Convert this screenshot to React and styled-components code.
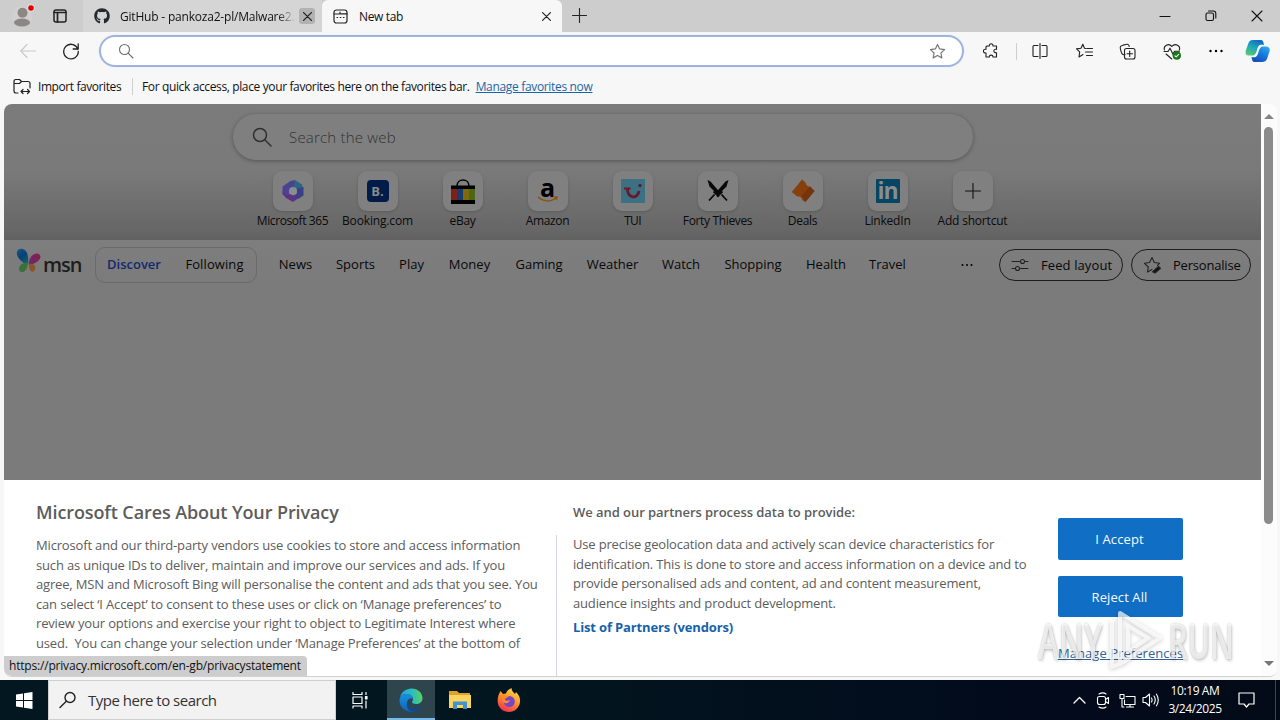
import styled, { createGlobalStyle } from 'styled-components';
import { FaGithub } from 'react-icons/fa';

const GlobalStyle = createGlobalStyle`
  * { box-sizing: border-box; }
  body {
    margin: 0;
    background: #f7f7f7;
    font-family: "Open Sans", "Noto Sans", sans-serif;
    font-size: 12px;
    color: #111;
  }
  svg { display: block; flex: none; }
`

const Screen = styled.div`
  width: 1280px;
  height: 720px;
  display: flex;
  flex-direction: column;
  overflow: hidden;
  position: relative;
`

const Label = styled.span`
  white-space: nowrap;
  letter-spacing: ${p => p.$ls || 0}px;
`

// ---------- tab strip ----------
const TabStrip = styled.div`
  height: 32px;
  flex: none;
  display: flex;
  background: #cdcdcd;
`

const ProfileArea = styled.div`
  width: 83px;
  display: flex;
  align-items: center;
  padding-left: 12px;
  gap: 17px;
`

const Tab = styled.div`
  width: ${p => p.$active ? 240 : 239}px;
  display: flex;
  align-items: center;
  padding: 0 ${p => p.$active ? 8 : 7}px 0 11px;
  background: ${p => p.$active ? '#f7f7f7' : '#d5d5d5'};
  border-radius: ${p => p.$active ? '6px 6px 0 0' : '0'};
  font-size: 12px;
`

const TabTitle = styled.div`
  flex: 1;
  margin-left: ${p => p.$gap}px;
  overflow: hidden;
  white-space: nowrap;
  letter-spacing: ${p => p.$ls}px;
  ${p => p.$fade && 'mask-image: linear-gradient(90deg, #000 88%, transparent 98%);'}
`

const TabClose = styled.div`
  width: 16px;
  height: 16px;
  border-radius: 3px;
  display: flex;
  align-items: center;
  justify-content: center;
  background: ${p => p.$hover ? '#b2b2b2' : 'transparent'};
`

const NewTabButton = styled.div`
  padding: 8px 0 0 10px;
  flex: 1;
`

const WindowButtons = styled.div`
  display: flex;
  align-items: center;
  gap: 34px;
  padding-right: 17px;
`

// ---------- toolbar ----------
const Toolbar = styled.div`
  height: 38px;
  flex: none;
  display: flex;
  align-items: center;
  padding-left: 20px;
`

const ReloadSlot = styled.div`
  flex: none;
  padding: 0 19px 0 26px;
`

const AddressBar = styled.div`
  width: 865px;
  flex: none;
  height: 32px;
  border: 2px solid #9fb3dc;
  border-radius: 16px;
  background: #fff;
  box-shadow: 0 0 0 1px #edf3fc;
  display: flex;
  align-items: center;
  justify-content: space-between;
  padding: 0 16px 0 17px;
`

const ToolIcons = styled.div`
  display: flex;
  align-items: center;
  margin-left: 18px;
`

const ToolSlot = styled.div`
  width: ${p => p.$w}px;
  flex: none;
  display: flex;
  justify-content: center;
`

const Separator = styled.div`
  width: 1px;
  height: 17px;
  background: #cfcfcf;
`

const FavoritesBar = styled.div`
  height: 34px;
  flex: none;
  display: flex;
  align-items: center;
  padding: 0 0 2px 13px;
`

const ImportFavorites = styled.div`
  display: flex;
  align-items: center;
  gap: 7px;
  width: 119px;
`

const FavHint = styled.div`
  display: flex;
  gap: 6px;
  padding-left: 9px;
`

const FavLink = styled.a`
  color: #1c66a8;
  text-decoration: underline;
  white-space: nowrap;
  letter-spacing: ${p => p.$ls}px;
`

// ---------- page ----------
const PageRow = styled.div`
  height: 573px;
  flex: none;
  margin: 0 3px 0 4px;
  display: flex;
  border-radius: 8px;
  overflow: hidden;
  border-bottom: 1px solid #d2d2d4;
  position: relative;
  background: #fff;
`

const Page = styled.div`
  width: 1257px;
  flex: none;
  display: flex;
  flex-direction: column;
`

const Hero = styled.div`
  height: 136px;
  flex: none;
  padding: 10px 0 0 229px;
  background: linear-gradient(180deg, #7b7b7b 0, #7a7a7a 66px, #666 128px, #616161 136px);
`

const SearchBox = styled.div`
  width: 740px;
  height: 46px;
  border-radius: 23px;
  background: #7f7f7f;
  box-shadow: 0 1px 4px rgba(0, 0, 0, 0.32);
  display: flex;
  align-items: center;
  padding-left: 19px;
  gap: 17px;
  color: #333;
  font-size: 15px;
  font-weight: 300;
`

const Shortcuts = styled.div`
  display: flex;
  padding: 11px 0 0 17px;
`

const Shortcut = styled.div`
  width: 85px;
  flex: none;
  display: flex;
  flex-direction: column;
  align-items: center;
  color: #0a0a0a;
`

const Tile = styled.div`
  width: 40px;
  height: 40px;
  border-radius: 9px;
  background: #808080;
  box-shadow: 0 1px 3px rgba(0, 0, 0, 0.16);
  display: flex;
  align-items: center;
  justify-content: center;
  margin-bottom: 1px;
`

const BookingMark = styled.div`
  width: 22px;
  height: 22px;
  border-radius: 4px;
  background: #011c48;
  color: #8a8a8a;
  font-weight: 700;
  font-size: 13px;
  line-height: 22px;
  text-align: center;
`

const LinkedInMark = styled.div`
  width: 24px;
  height: 24px;
  border-radius: 1px;
  background: #054664;
  color: #8c8c8c;
  font: 700 23px/23px "Open Sans", sans-serif;
  text-align: center;
  letter-spacing: -1px;
`

const AmazonMark = styled.div`
  position: relative;
  font: 700 25px/16px "Open Sans", sans-serif;
  color: #000;
  height: 24px;
  svg { position: absolute; left: -3px; top: 17px; }
`

const Feed = styled.div`
  height: 240px;
  flex: none;
  background: linear-gradient(180deg, #7e7e7e, #7b7b7b 45px, #7b7b7b);
`

const FeedNav = styled.div`
  height: 50px;
  display: flex;
  align-items: center;
  padding-left: 12px;
  font-size: 13px;
  color: #080808;
`

const MsnLogo = styled.div`
  display: flex;
  width: 79px;
  font-size: 20px;
  line-height: 30px;
  font-weight: 600;
  color: #1d1d1d;
  gap: 1px;
  height: 34px;
  letter-spacing: -1px;
`

const MsnName = styled.span`
  padding-top: 2px;
`

const FeedSwitch = styled.div`
  width: 162px;
  height: 36px;
  border: 1px solid #6a6a6a;
  border-radius: 10px;
  display: flex;
  align-items: center;
  padding: 0 0 2px 11px;
  gap: 24px;
  margin-right: 22px;
`

const NavItem = styled.div`
  width: ${p => p.$w}px;
  flex: none;
  display: flex;
  justify-content: center;
  white-space: nowrap;
  letter-spacing: ${p => p.$ls || 0}px;
  ${p => p.$active && 'color: #12296e; font-weight: 600;'}
`

const NavList = styled.div`
  display: flex;
  gap: 24px;
  flex: 1;
  padding-bottom: 2px;
`

const PillButton = styled.div`
  width: ${p => p.$w}px;
  height: 32px;
  border: 1px solid #1c1c1c;
  border-radius: 16px;
  display: flex;
  align-items: center;
  padding-left: 11px;
  gap: ${p => p.$gap}px;
  margin-right: ${p => p.$mr}px;
  white-space: nowrap;
  letter-spacing: ${p => p.$ls}px;
`

const MoreDots = styled.svg`
  margin-right: 26px;
`

const Consent = styled.div`
  flex: 1;
  display: flex;
  background: #fff;
  color: #5c5c5c;
  overflow: hidden;
`

const PrivacyColumn = styled.div`
  width: 553px;
  padding: 20px 0 0 32px;
`

const PrivacyTitle = styled.h2`
  margin: 0 0 11px;
  font-size: 18px;
  line-height: 25px;
  font-weight: 600;
  color: #5c5c5c;
  white-space: nowrap;
  letter-spacing: ${p => p.$ls}px;
`

const Paragraph = styled.p`
  margin: 0;
  font-size: 13px;
  line-height: 19.5px;
  white-space: pre;
  letter-spacing: ${p => p.$ls}px;
`

const PartnersColumn = styled.div`
  width: 501px;
  display: flex;
  flex-direction: column;
  padding-top: 22px;
`

const PartnersTitle = styled.h3`
  margin: 0 0 12px 16px;
  font-size: 13px;
  line-height: 21px;
  font-weight: 600;
  letter-spacing: ${p => p.$ls}px;
`

const PartnersBody = styled.div`
  flex: 1;
  border-left: 1px solid #d4d6dc;
  padding-left: 16px;
  margin-left: -1px;
`

const PartnersLink = styled.div`
  margin-top: 4px;
  font-size: 13px;
  line-height: 20px;
  font-weight: 700;
  color: #1462ac;
  letter-spacing: ${p => p.$ls}px;
`

const ConsentActions = styled.div`
  width: 125px;
  padding-top: 38px;
  display: flex;
  flex-direction: column;
`

const ConsentButton = styled.div`
  height: ${p => p.$h}px;
  margin-bottom: 16px;
  border-radius: 2px;
  background: #106ec5;
  color: #f4fafd;
  font-size: 13px;
  display: flex;
  align-items: center;
  justify-content: center;
  letter-spacing: ${p => p.$ls}px;
  padding-right: 2px;
`

const PreferencesLink = styled.a`
  margin-top: 11px;
  font-size: 13px;
  text-decoration: underline;
  color: #336496;
  white-space: nowrap;
  letter-spacing: ${p => p.$ls}px;
`

const Scrollbar = styled.div`
  flex: 1;
  background: #fcfcfc;
  display: flex;
  flex-direction: column;
  align-items: center;
  padding: 10px 1px 10px 0;
`

const ScrollThumb = styled.div`
  width: 9px;
  height: 397px;
  margin: 8px 0 auto;
  border-radius: 5px;
  background: #8b8b8b;
`

const StatusBubble = styled.div`
  position: absolute;
  left: 0;
  bottom: 0;
  width: 303px;
  height: 20px;
  border-radius: 0 4px 0 0;
  background: #cdcdcd;
  color: #111;
  padding-left: 5px;
  line-height: 20px;
  white-space: nowrap;
  letter-spacing: ${p => p.$ls}px;
`

const Watermark = styled.div`
  position: absolute;
  left: 1038px;
  top: 608px;
  width: 196px;
  height: 66px;
  display: flex;
  align-items: center;
  justify-content: space-between;
  color: rgba(255, 255, 255, 0.7);
  text-shadow: 0 0 3px rgba(0, 0, 0, 0.22), 1px 2px 4px rgba(0, 0, 0, 0.18);
  font: 600 48px/66px "Open Sans", sans-serif;
  svg { filter: drop-shadow(0 1px 2px rgba(0, 0, 0, 0.28)); }
`

const WatermarkWord = styled.span`
  width: 66px;
  transform: scaleX(${p => p.$sx});
  transform-origin: ${p => p.$from} center;
  display: flex;
  justify-content: ${p => p.$from === 'left' ? 'flex-start' : 'flex-end'};
`

// ---------- taskbar ----------
const Taskbar = styled.div`
  height: 40px;
  margin-top: auto;
  flex: none;
  display: flex;
  align-items: center;
  background: linear-gradient(90deg, #02171f 0, #02161f 500px, #020a1c 1050px, #030a17 1280px);
  color: #fff;
`

const StartButton = styled.div`
  width: 48px;
  flex: none;
  padding-left: 16px;
`

const TaskSearch = styled.div`
  width: 288px;
  height: 40px;
  background: #f2f2f2;
  border: 1px solid #d0d0d0;
  color: #333;
  font-size: 15px;
  display: flex;
  align-items: center;
  padding-left: 10px;
  gap: 11px;
`

const TaskSlot = styled.div`
  width: ${p => p.$w || 49}px;
  height: 40px;
  display: flex;
  align-items: center;
  justify-content: center;
  background: ${p => p.$active ? '#2f454d' : 'transparent'};
  border-bottom: 2px solid ${p => p.$active ? '#76b9ed' : 'transparent'};
  padding: 2px ${p => p.$pr || 0}px 0 0;
`

const Tray = styled.div`
  margin-left: auto;
  display: flex;
  align-items: center;
  height: 40px;
  width: 213px;
`

const TraySlot = styled.div`
  width: 24px;
  flex: none;
  display: flex;
  justify-content: center;
`

const Clock = styled.div`
  width: 64px;
  flex: none;
  text-align: center;
  font-size: 12px;
  line-height: 18px;
  letter-spacing: ${p => p.$ls}px;
`

const ActionCenter = styled.div`
  flex: 1;
  padding-left: 11px;
`

const PeekEdge = styled.div`
  width: 5px;
  height: 40px;
  border-left: 1px solid #3b4450;
`

const Icon = ({ w = 16, h, vb, sw = 1.1, color = '#222', children }) => (
  <svg width={w} height={h || w} viewBox={vb || `0 0 ${w} ${h || w}`} fill="none"
    stroke={color} strokeWidth={sw} strokeLinecap="round" strokeLinejoin="round">
    {children}
  </svg>
)

const Cross = ({ size = 8, sw = 1.3 }) => (
  <Icon w={size} sw={sw}><path d={`M.6.6 ${size - .6} ${size - .6}M${size - .6} .6.6 ${size - .6}`} /></Icon>
)

const ProfileIcon = () => (
  <svg width="24" height="24" viewBox="0 0 24 24">
    <circle cx="10" cy="12" r="10" fill="#d3d1cf" />
    <circle cx="10.500" cy="8.800" r="5" fill="#8a8784" />
    <ellipse cx="10" cy="18.500" rx="8" ry="4" fill="#8a8784" />
    <circle cx="19" cy="4" r="4" fill="#dcdcdc" />
    <circle cx="19" cy="4" r="2.800" fill="#e0000b" />
  </svg>
)

const EbayBag = () => (
  <svg width="24" height="25" viewBox="0 0 24 25">
    <path d="M6 7c0-8 12-8 12 0" fill="none" stroke="#000" strokeWidth="1.600" />
    <path fill="#000" d="M0 6.500h24V25H0z" />
    <path fill="#7b2118" d="M0 10h6v11H0z" />
    <path fill="#173c70" d="M6 10h6v11H6z" />
    <path fill="#80690a" d="M12 10h6v11h-6z" />
    <path fill="#4b6812" d="M18 10h6v11h-6z" />
  </svg>
)

const TuiMark = () => (
  <svg width="24" height="24" viewBox="0 0 24 24" fill="none">
    <path fill="#3b7182" d="M0 0h24v24H0z" />
    <path d="M6.500 9c-.8 11 10.500 11.500 11.500 3" stroke="#681827" strokeWidth="2.800" />
    <path d="M3 9.500h6.500" stroke="#681827" strokeWidth="2" />
    <circle cx="19" cy="6.500" r="1.700" fill="#681827" />
  </svg>
)

const Sword = () => (
  <>
    <path d="M.5 0l3 1.500L13 12.500l-2.500 2L2.500 6.500z" fill="#080808" />
    <path d="M10 16.500l5.500-5M14.500 14.500l5.500 6" stroke="#080808" strokeWidth="1.800" />
  </>
)

const Swords = () => (
  <svg width="22" height="22" viewBox="0 0 22 22">
    <Sword />
    <g transform="matrix(-1 0 0 1 22 0)"><Sword /></g>
  </svg>
)

const OfficeMark = () => (
  <svg width="24" height="24" viewBox="0 0 24 24">
    <path d="M9 2.500L14 1l7 4.500L22 9l-6.500 1-3.500-2z" fill="#2b6685" />
    <path d="M9.500 2L14 1.500 12.500 8 8 11v5l-3 1.500-3.500-3v-7z" fill="#4a4490" />
    <path d="M1.500 12c2 5 5 4.500 8 2.500l3 2 7.500-3.500L19 18l-7 5-7-4-3.500-4z" fill="#5a3482" />
    <path d="M22.500 8v8.500L17 20l-3-3.500 2-2.500v-4.500z" fill="#384187" />
    <circle cx="12" cy="12" r="3.900" fill="#8b8b90" />
  </svg>
)

const DealTag = () => (
  <svg width="24" height="25" viewBox="0 0 24 25">
    <path d="M11 .5l3.500 3 .7 2.300 1.800 1.500 2 .1L23.500 12l-9.300 11-3-2-.6-2-2-1.600-2.400.1L.8 13z" fill="#873f0d" />
    <path d="M10.500 17l4 6 9-11-4.500-4.500z" fill="#73340e" />
  </svg>
)

const Butterfly = () => (
  <svg width="26" height="26" viewBox="0 0 26 26">
    <defs>
      <linearGradient id="wingL" x1="0" y1="0" x2="0.500" y2="1">
        <stop offset="0" stopColor="#155b86" /><stop offset=".55" stopColor="#083f79" /><stop offset="1" stopColor="#155f6e" />
      </linearGradient>
      <linearGradient id="wingR" x1="1" y1="0" x2="0" y2="1">
        <stop offset="0" stopColor="#861f48" /><stop offset="1" stopColor="#6d2872" />
      </linearGradient>
    </defs>
    <path d="M1 4C2-1 9 0 11 5c1.500 4 1.500 8 1 12C6 15 0 9 1 4z" fill="url(#wingL)" />
    <path d="M12 15c-6-1-10.500 4-8.500 7.500C6 26.500 11.500 23 12 15z" fill="#3a7039" />
    <path d="M13 17C12 10 18 4 22.500 6c4.500 2 1 9-9.500 11z" fill="url(#wingR)" />
    <path d="M13 16c5-1 7 2 6 5.500-1.500 4-6.500 3-6-5.500z" fill="#8b5426" />
  </svg>
)

const Copilot = () => (
  <svg width="25" height="24" viewBox="0 0 25 24">
    <defs>
      <linearGradient id="cpA" x1=".7" y1="0" x2=".2" y2="1">
        <stop offset="0" stopColor="#1267c8" /><stop offset=".45" stopColor="#19a5bd" /><stop offset="1" stopColor="#58ca70" />
      </linearGradient>
      <linearGradient id="cpB" x1=".8" y1="0" x2=".2" y2="1">
        <stop offset="0" stopColor="#2aa8ef" /><stop offset=".5" stopColor="#1774dc" /><stop offset="1" stopColor="#154bb2" />
      </linearGradient>
    </defs>
    <path d="M8 1h8c2 0 2.500 2 3 5-5-1-6 1-7 5-1 3.500-2 5.500-5 5.500H3.500C1 16.500 0 14.500.8 11.500L3.500 4C4.300 2 5.500 1 8 1z" fill="url(#cpA)" />
    <path d="M17 23H9.500c-2 0-2.500-2-3-5 5 1 6-1 7-5 1-3.500 2-5.500 5-5.500H21c3 0 4.300 2 3.500 5L22 20c-.8 2-2.500 3-5 3z" fill="url(#cpB)" />
  </svg>
)

const EdgeLogo = () => (
  <svg width="24" height="24" viewBox="0 0 24 24">
    <defs>
      <linearGradient id="edA" x1="0" y1=".5" x2="1" y2=".4">
        <stop offset="0" stopColor="#299fe2" /><stop offset=".5" stopColor="#2abac5" /><stop offset="1" stopColor="#58d45c" />
      </linearGradient>
      <linearGradient id="edB" x1="0" y1="0" x2="0" y2="1">
        <stop offset="0" stopColor="#1691de" /><stop offset="1" stopColor="#1163b8" />
      </linearGradient>
    </defs>
    <path d="M1 10C2 4 7 .5 12.500.5 19 .5 23.500 5 23.500 10c0 4-3 6-6.500 6-2.500 0-4-1-4-2 0-.6 1-1.200 1-3 0-3-3-5-6.500-5C4.500 6 2 7.500 1 10z" fill="url(#edA)" />
    <path d="M.5 12.500C.5 8.500 4 6 7.500 6c3.600 0 6.500 2 6.500 5-4-1.500-6 1.500-6 4.500 0 4 3 7.500 7 8C7 25 .5 19.500.5 12.500z" fill="url(#edB)" />
    <path d="M10 11.500c-3 4 0 9 5 9 3 0 5-1 6.500-2.500.5-.4 1 0 .7.600C20.500 22 17 24 13 23.500c-5-1-7-7-3-12z" fill="#114a8b" />
  </svg>
)

const FolderLogo = () => (
  <svg width="22" height="20" viewBox="0 0 22 20">
    <path d="M0 1h8l2 2h11v15H0z" fill="#dda32b" />
    <path d="M0 5h22v13H0z" fill="#fbd35f" />
    <path d="M4 19v-7.500h14V19h-4v-4H8v4z" fill="#3f93cf" />
  </svg>
)

const FirefoxLogo = () => (
  <svg width="24" height="24" viewBox="0 0 24 24">
    <defs>
      <linearGradient id="fx" x1=".8" y1="0" x2=".3" y2="1">
        <stop offset="0" stopColor="#ffe14a" /><stop offset=".45" stopColor="#ff9a2c" /><stop offset="1" stopColor="#f2304e" />
      </linearGradient>
    </defs>
    <path d="M2 6l1.500-3L6 6l3-.5C10 2 13 1 14.500 0c0 3 2 4 3.500 6l1-2c3 3 4.500 6 4 10-.7 6-5.500 10-11 10S1 20 .7 14C.6 11 1 8 2 6z" fill="url(#fx)" />
    <circle cx="12.300" cy="13.500" r="5.500" fill="#7646c8" />
    <path d="M4 8c4-2 5 0 8 0-1 2-4 1.500-4 4 1 1 3 1 5 0-1 4-6 4-7.500 1z" fill="#ff8a26" />
  </svg>
)

const shortcuts = [
  { name: 'Microsoft 365', ls: -0.4, icon: <OfficeMark /> },
  { name: 'Booking.com', ls: -0.15, icon: <BookingMark>B.</BookingMark> },
  { name: 'eBay', ls: -0.3, icon: <EbayBag /> },
  { name: 'Amazon', ls: -0.35, icon: (
    <AmazonMark>a<svg width="22" height="7" viewBox="0 0 22 7" fill="none" stroke="#8a5415" strokeWidth="1.500"><path d="M1 1c6 5 13 5 18 1M17 1.500l3-.5-.7 3" /></svg></AmazonMark>
  ) },
  { name: 'TUI', ls: -0.7, icon: <TuiMark /> },
  { name: 'Forty Thieves', ls: -0.35, icon: <Swords /> },
  { name: 'Deals', ls: -0.3, icon: <DealTag /> },
  { name: 'LinkedIn', ls: -0.2, icon: <LinkedInMark>in</LinkedInMark> },
  { name: 'Add shortcut', ls: -0.2, icon: <Icon w={16} color="#111"><path d="M8 .5v15M.5 8h15" /></Icon> },
]

const topics = [
  ['News', 33], ['Sports', 39], ['Play', 25], ['Money', 43], ['Gaming', 48], ['Weather', 51],
  ['Watch', 38], ['Shopping', 58], ['Health', 40], ['Travel', 35],
]

const star = 'M8 1.300l2 4.300 4.700.6-3.500 3.200.9 4.600L8 11.700 3.900 14l.9-4.600L1.300 6.200 6 5.600z'

const BrowserTabs = () => (
  <TabStrip>
    <ProfileArea>
      <ProfileIcon />
      <Icon w={14} h={14} sw={1.500}><rect x="1" y="1" width="12" height="12" rx="2" /><path d="M1 3.500h12M4.500 4v9" strokeWidth="1.700" /></Icon>
    </ProfileArea>
    <Tab>
      <FaGithub size={16} color="#24292e" />
      <TabTitle $gap={10} $ls={-0.2} $fade>GitHub - pankoza2-pl/Malware2.</TabTitle>
      <TabClose $hover><Cross size={9} /></TabClose>
    </Tab>
    <Tab $active>
      <Icon w={15} sw={1.200}><rect x="1" y="1" width="13" height="13" rx="2.500" /><path d="M1 5h6V3M8 4.800h6M4 8.500h.6M7.200 8.500h.6M10.400 8.500h.6" /></Icon>
      <TabTitle $gap={11} $ls={-0.35}>New tab</TabTitle>
      <TabClose><Cross size={9} sw={1.200} /></TabClose>
    </Tab>
    <NewTabButton><Icon w={15}><path d="M7.500.5v14M.5 7.500h14" /></Icon></NewTabButton>
    <WindowButtons>
      <Icon w={12} color="#111"><path d="M1 6.500h10" /></Icon>
      <Icon w={12} color="#111"><rect x="1" y="3" width="7.500" height="7.500" rx="1.500" /><path d="M3.500 1h5Q10.800 1 10.800 3.500v4.500" /></Icon>
      <Icon w={12} color="#111"><path d="M1 1l10 10M11 1L1 11" /></Icon>
    </WindowButtons>
  </TabStrip>
)

const BrowserToolbar = () => (
  <Toolbar>
    <Icon w={16} color="#c9c9c9"><path d="M15.500 8H.8M7 1.500L.8 8 7 14.500" /></Icon>
    <ReloadSlot><Icon w={18} sw={1.300}><path d="M16 7.500A7.300 7.300 0 1 0 16.300 9.500M16.200 2v5h-5" /></Icon></ReloadSlot>
    <AddressBar>
      <Icon w={16} color="#6b6b6b"><circle cx="6.500" cy="6.500" r="5" /><path d="M10.300 10.300l4.700 4.700" /></Icon>
      <Icon w={17} vb="0 0 16 16" color="#777"><path d={star} /></Icon>
    </AddressBar>
    <ToolIcons>
      <ToolSlot $w={18}>
        <Icon w={16}><path d="M4 3h2.300c-.3-3 4-3 3.700 0h3.500v3.300c-3.500-.6-3.500 3.700 0 3.500V14H10c0-2.500-3.700-2.500-3.700 0H3v-4C-.5 10.500-.5 5.500 3 6.300V4z" /></Icon>
      </ToolSlot>
      <ToolSlot $w={32}><Separator /></ToolSlot>
      <ToolSlot $w={16}><Icon w={16}><path d="M6 2.500H2Q1 2.500 1 3.500v9q0 1 1 1h4M10 2.500h4q1 0 1 1v9q0 1-1 1h-4M8 .5v15" /></Icon></ToolSlot>
      <ToolSlot $w={72}><Icon w={17} h={16}><path d="M10 5.500L8.500 5.300 6.800 1.300 5 5.300l-4.500.6 3.200 3L3 14l4-2.500M11 5.500h5.500M9.500 9h7M10.500 12.500h6" /></Icon></ToolSlot>
      <ToolSlot $w={15}><Icon w={17}><path d="M6 11.500C3 12.500 2.500 10 1.500 6.500.8 3.500 1.300 3 4 2.200 8 1 9.500.5 10.300 3.500" /><rect x="5.500" y="5.500" width="10.500" height="10.500" rx="2" /><path d="M10.700 8v5.500M8 10.700h5.500" /></Icon></ToolSlot>
      <ToolSlot $w={73}><Icon w={18} h={17}>
        <path d="M1.500 7C0 3 5.500-.5 8.800 3.300 12.500-.5 18 3 16.300 7M1 8.500h4l2-3.300 3 6 1.500-3h5M3 11l5.800 5" />
        <circle cx="13.800" cy="12.500" r="4" fill="#177b18" stroke="#0d6a10" strokeWidth=".5" /><path d="M12 12.800l1.200 1 2.500-2.500" stroke="#fff" />
      </Icon></ToolSlot>
      <ToolSlot $w={15}><svg width="14" height="4" viewBox="0 0 14 4"><circle cx="1.500" cy="2" r="1.200" /><circle cx="7" cy="2" r="1.200" /><circle cx="12.500" cy="2" r="1.200" /></svg></ToolSlot>
      <ToolSlot $w={69}><Copilot /></ToolSlot>
    </ToolIcons>
  </Toolbar>
)

const NewTabPage = () => (
  <Page>
    <Hero>
      <SearchBox>
        <Icon w={20} sw={1.500} color="#303030"><circle cx="8" cy="8" r="6.500" /><path d="M13 13l6 6" /></Icon>
        <Label $ls={0.2}>Search the web</Label>
      </SearchBox>
      <Shortcuts>
        {shortcuts.map(s => (
          <Shortcut key={s.name}>
            <Tile>{s.icon}</Tile>
            <Label $ls={s.ls}>{s.name}</Label>
          </Shortcut>
        ))}
      </Shortcuts>
    </Hero>
    <Feed>
      <FeedNav>
        <MsnLogo><Butterfly /><MsnName>msn</MsnName></MsnLogo>
        <FeedSwitch>
          <NavItem $w={54} $active>Discover</NavItem>
          <NavItem $w={59} $ls={0.1}>Following</NavItem>
        </FeedSwitch>
        <NavList>{topics.map(([name, w]) => <NavItem key={name} $w={w}>{name}</NavItem>)}</NavList>
        <MoreDots width="12" height="4" viewBox="0 0 12 4"><circle cx="1.500" cy="2" r="1" /><circle cx="6" cy="2" r="1" /><circle cx="10.500" cy="2" r="1" /></MoreDots>
        <PillButton $w={124} $mr={8} $gap={12} $ls={0.1}>
          <Icon w={18} h={16}><path d="M1 4.500h8.500M13.500 4.500H17M1 11.500h3.500M8.500 11.500H17" /><circle cx="11.500" cy="4.500" r="2" /><circle cx="6.500" cy="11.500" r="2" /></Icon>
          Feed layout
        </PillButton>
        <PillButton $w={120} $mr={10} $gap={11} $ls={-0.2}>
          <Icon w={19} h={18}><path d="M9 13.500l-4.500 2.500.8-5L1.500 7.300l5-.8L9 1.500l2.300 5 5.200.8-2 2" /><path d="M9.500 15.800l6-5.500 2 2-5.500 4.700z" fill="#111" /></Icon>
          Personalise
        </PillButton>
      </FeedNav>
    </Feed>
    <Consent>
      <PrivacyColumn>
        <PrivacyTitle $ls={-0.1}>Microsoft Cares About Your Privacy</PrivacyTitle>
        <Paragraph $ls={-0.165}>{`Microsoft and our third-party vendors use cookies to store and access information
such as unique IDs to deliver, maintain and improve our services and ads. If you
agree, MSN and Microsoft Bing will personalise the content and ads that you see. You
can select ‘I Accept’ to consent to these uses or click on ‘Manage preferences’ to
review your options and exercise your right to object to Legitimate Interest where
used.  You can change your selection under ‘Manage Preferences’ at the bottom of`}</Paragraph>
      </PrivacyColumn>
      <PartnersColumn>
        <PartnersTitle $ls={-0.05}>We and our partners process data to provide:</PartnersTitle>
        <PartnersBody>
          <Paragraph $ls={-0.17}>{`Use precise geolocation data and actively scan device characteristics for
identification. This is done to store and access information on a device and to
provide personalised ads and content, ad and content measurement,
audience insights and product development.`}</Paragraph>
          <PartnersLink $ls={-0.15}>List of Partners (vendors)</PartnersLink>
        </PartnersBody>
      </PartnersColumn>
      <ConsentActions>
        <ConsentButton $h={42} $ls={0.1}>I Accept</ConsentButton>
        <ConsentButton $h={41} $ls={0.1}>Reject All</ConsentButton>
        <PreferencesLink $ls={0.05}>Manage Preferences</PreferencesLink>
      </ConsentActions>
    </Consent>
  </Page>
)

const WindowsTaskbar = () => (
  <Taskbar>
    <StartButton>
      <svg width="17" height="17" viewBox="0 0 17 17" fill="#fff"><path d="M0 2.500l7-1V8H0zM8 1.300L16.500 0v8H8zM0 9h7v6.500l-7-1zM8 9h8.500v8L8 15.700z" /></svg>
    </StartButton>
    <TaskSearch>
      <Icon w={18} sw={1.400} color="#222"><circle cx="11" cy="6.500" r="5" /><path d="M7.300 10.200L1 16.500" /></Icon>
      <Label $ls={-0.5}>Type here to search</Label>
    </TaskSearch>
    <TaskSlot $w={51} $pr={3}>
      <Icon w={16} h={17} color="#fff" sw={1.200}><path d="M1 .5v2h9v-2M1 16v-2h9v2M14 .5v2M14 9v7" /><rect x="1" y="5" width="9" height="6.500" /><rect x="13.500" y="4.500" width="1.500" height="2.500" fill="#fff" /></Icon>
    </TaskSlot>
    <TaskSlot $w={48} $active><EdgeLogo /></TaskSlot>
    <TaskSlot><FolderLogo /></TaskSlot>
    <TaskSlot><FirefoxLogo /></TaskSlot>
    <Tray>
      <TraySlot><Icon w={13} h={8} color="#fff" sw={1.300}><path d="M1 7l5.500-5.500L12 7" /></Icon></TraySlot>
      <TraySlot><Icon w={14} h={17} color="#fff"><path d="M3 2Q7-.3 10 2M3 15q4 2.300 7 0M9.500 7.500l3-2v6l-3-2" /><rect x="1.500" y="4.500" width="8" height="8" rx="2" /></Icon></TraySlot>
      <TraySlot><Icon w={17} h={15} color="#fff"><path d="M7 3.500h9v8H5.500V7M11 11.500v2.500M7.500 14h7M1 1.500h4v4H1zM3 5.500v8.500h2" /></Icon></TraySlot>
      <TraySlot><Icon w={18} h={14} color="#fff"><path d="M1 4.500h2.500L7.500 1v12L3.500 9.500H1zM9.500 5q1.200 2 0 4M12 3q2.500 4 0 8M14.500 1.200q3.500 5.800 0 11.600" /></Icon></TraySlot>
      <Clock $ls={-0.4}>10:19 AM<br />3/24/2025</Clock>
      <ActionCenter>
        <Icon w={17} h={16} color="#fff" sw={1.200}><path d="M1 1h15v11h-5l-2.500 3L6 12H1z" /></Icon>
      </ActionCenter>
      <PeekEdge />
    </Tray>
  </Taskbar>
)

const App = () => {
  return (
    <Screen>
      <GlobalStyle />
      <BrowserTabs />
      <BrowserToolbar />
      <FavoritesBar>
        <ImportFavorites>
          <Icon w={18} h={17} sw={1.200}><path d="M5 15H3Q1 15 1 13V3.500Q1 1.500 3 1.500h3.500l2 2H15q2 0 2 2V10M1 5.500h5.500l2-2M8 13.500h8.500M10 11.500l-2 2 2 2M14.500 11.500l2 2-2 2" /></Icon>
          <Label $ls={-0.42}>Import favorites</Label>
        </ImportFavorites>
        <Separator />
        <FavHint>
          <Label $ls={-0.37}>For quick access, place your favorites here on the favorites bar.</Label>
          <FavLink $ls={-0.33}>Manage favorites now</FavLink>
        </FavHint>
      </FavoritesBar>
      <PageRow>
        <NewTabPage />
        <Scrollbar>
          <svg width="10" height="5" viewBox="0 0 10 5"><path d="M0 5l5-5 5 5z" fill="#858585" /></svg>
          <ScrollThumb />
          <svg width="10" height="5" viewBox="0 0 10 5"><path d="M0 0l5 5 5-5z" fill="#757575" /></svg>
        </Scrollbar>
        <StatusBubble $ls={-0.19}>https://privacy.microsoft.com/en-gb/privacystatement</StatusBubble>
      </PageRow>
      <WindowsTaskbar />
      <Watermark>
        <WatermarkWord $sx={0.66} $from="left">ANY</WatermarkWord>
        <svg width="56" height="62" viewBox="0 0 56 62" fill="none" stroke="rgba(255,255,255,.7)" strokeWidth="4" strokeLinejoin="round">
          <path d="M12 3l40 25L12 54zM4 10v47l12-5M20 16v26l20-14z" />
        </svg>
        <WatermarkWord $sx={0.63} $from="right">RUN</WatermarkWord>
      </Watermark>
    </Screen>
  );
}

export default App;
